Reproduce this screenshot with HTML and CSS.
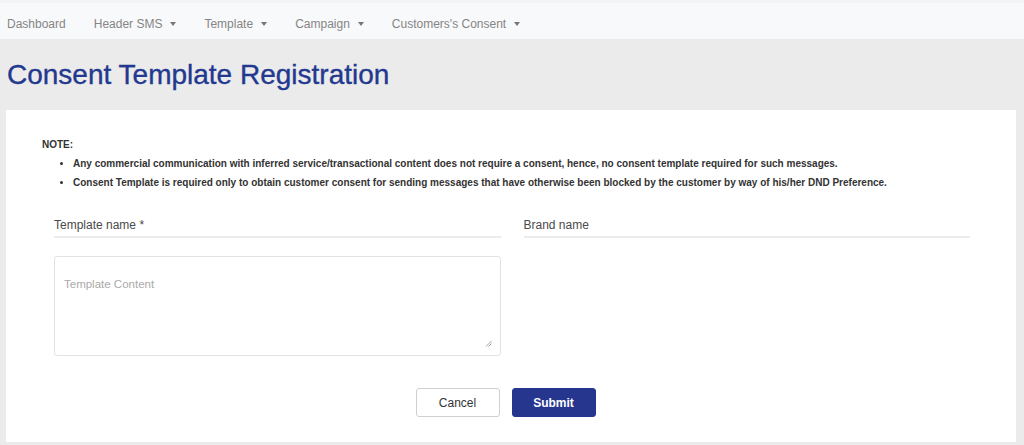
FILE: index.html
```html
<!DOCTYPE html>
<html lang="en">
<head>
<meta charset="utf-8">
<title>Consent Template Registration</title>
<link rel="stylesheet" href="styles.css">
</head>
<body>
<nav class="topnav">
  <a class="nav-item">Dashboard</a>
  <a class="nav-item dropdown">Header SMS</a>
  <a class="nav-item dropdown">Template</a>
  <a class="nav-item dropdown">Campaign</a>
  <a class="nav-item dropdown">Customers's Consent</a>
</nav>
<main class="page">
  <h1 class="page-title">Consent Template Registration</h1>
  <section class="card">
    <div class="note">
      <div class="note-title">NOTE:</div>
      <ul class="note-list">
        <li>Any commercial communication with inferred service/transactional content does not require a consent, hence, no consent template required for such messages.</li>
        <li>Consent Template is required only to obtain customer consent for sending messages that have otherwise been blocked by the customer by way of his/her DND Preference.</li>
      </ul>
    </div>
    <form class="form">
      <div class="form-grid">
        <div class="field-col">
          <label class="field-line">Template name *</label>
          <div class="textarea"><span class="placeholder">Template Content</span>
            <svg class="resize" width="7" height="7" viewBox="0 0 7 7"><path d="M1 6.5L6.5 1M3.5 6.5L6.5 3.5" stroke="#888" stroke-width="0.8" fill="none"/></svg>
          </div>
        </div>
        <div class="field-col">
          <label class="field-line">Brand name</label>
        </div>
      </div>
      <div class="actions">
        <button type="button" class="btn btn-cancel">Cancel</button>
        <button type="button" class="btn btn-submit">Submit</button>
      </div>
    </form>
  </section>
</main>
</body>
</html>
```
FILE: styles.css
```css
* { box-sizing: border-box; }
html, body {
  margin: 0;
  padding: 0;
  background: #ebebeb;
  font-family: "Liberation Sans", Arial, sans-serif;
}
.topnav {
  height: 39px;
  background: #f8f9fa;
  border-top: 3px solid #f3f4f5;
  display: flex;
  align-items: center;
  padding: 6px 0 0 7px;
  gap: 28px;
}
.nav-item {
  font-size: 12px;
  color: #858585;
  display: flex;
  align-items: center;
}
.nav-item.dropdown::after {
  content: "";
  display: inline-block;
  margin-left: 8px;
  border-left: 3.5px solid transparent;
  border-right: 3.5px solid transparent;
  border-top: 4px solid #777;
}
.page {
  padding: 0 8px 0 6px;
}
.page-title {
  margin: 0;
  padding: 21px 0 0 1px;
  height: 71px;
  font-size: 28px;
  font-weight: normal;
  color: #22398f;
  line-height: 30px;
  -webkit-text-stroke: 0.35px #22398f;
}
.card {
  background: #fff;
  height: 332px;
  padding-top: 25px;
}
.note {
  padding-left: 36px;
  font-size: 10px;
  font-weight: bold;
  color: #333;
  line-height: 19px;
}
.note-list {
  margin: 0;
  padding-left: 31px;
}
.form {
  padding: 25px 46px 0 48px;
}
.form-grid {
  display: grid;
  grid-template-columns: 1fr 1fr;
  column-gap: 23px;
}
.field-line {
  display: block;
  font-size: 12px;
  color: #4a4a4a;
  line-height: 16px;
  padding-bottom: 3px;
  border-bottom: 2px solid #ececec;
}
.textarea {
  position: relative;
  margin-top: 18px;
  height: 100px;
  border: 1px solid #e2e2e2;
  border-radius: 3px;
  padding: 17px 9px;
}
.placeholder {
  font-size: 11.5px;
  color: #aaa;
  line-height: 14px;
}
.resize {
  position: absolute;
  right: 8px;
  bottom: 8px;
}
.actions {
  display: flex;
  justify-content: center;
  gap: 12px;
  margin-top: 32px;
  padding-right: 13px;
}
.btn {
  width: 84px;
  height: 29px;
  border-radius: 3px;
  font-family: "Liberation Sans", Arial, sans-serif;
  font-size: 12px;
  cursor: pointer;
}
.btn-cancel {
  background: #fff;
  border: 1px solid #cfcfcf;
  color: #333;
}
.btn-submit {
  background: #26368e;
  border: 1px solid #26368e;
  color: #fff;
  font-weight: bold;
}
```
